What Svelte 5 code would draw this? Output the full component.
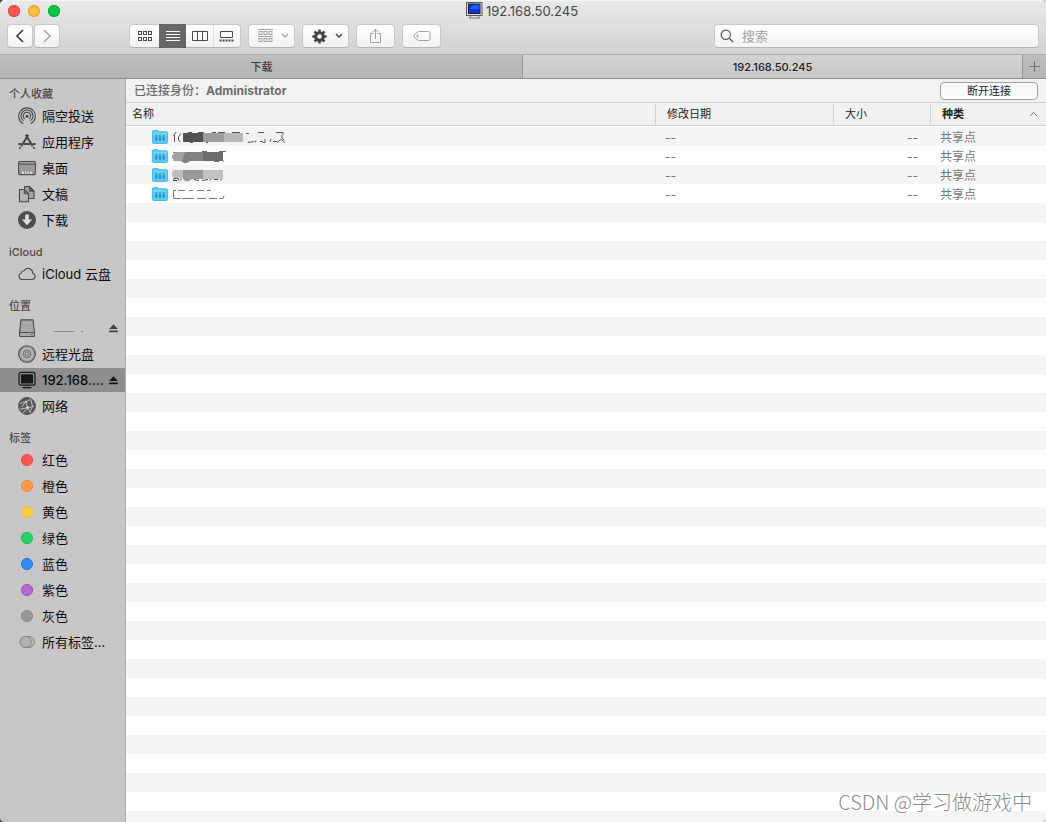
<script>
  const favorites = [
    ['airdrop', '隔空投送'],
    ['apps', '应用程序'],
    ['desktop', '桌面'],
    ['docs', '文稿'],
    ['down', '下载'],
  ];
  const tags = [
    ['红色', '#fc5753', '#e9463f'],
    ['橙色', '#fd9a44', '#ea8434'],
    ['黄色', '#fdca45', '#ecb93c'],
    ['绿色', '#25d366', '#14b850'],
    ['蓝色', '#2e8af7', '#1b74e0'],
    ['紫色', '#b568d2', '#9a50ba'],
    ['灰色', '#999798', '#848283'],
  ];
  const sections = [
    { title: '个人收藏', items: favorites.map(([icon, label]) => ({ icon, label })) },
    { title: 'iCloud', items: [{ icon: 'cloud', label: 'iCloud 云盘' }] },
    {
      title: '位置',
      items: [
        { icon: 'drive', label: '', eject: true },
        { icon: 'disc', label: '远程光盘' },
        { icon: 'screen', label: '192.168....', eject: true, selected: true },
        { icon: 'globe', label: '网络' },
      ],
    },
    {
      title: '标签',
      items: [
        ...tags.map(([label, fill, stroke]) => ({ icon: 'tag', label, fill, stroke })),
        { icon: 'all', label: '所有标签...' },
      ],
    },
  ];
  const rows = [0, 1, 2, 3];
</script>

{#snippet sideIcon(item)}
  <svg class="icon" width="18" height="18" viewBox="0 0 18 18" fill="none" stroke="#4b494a" aria-hidden="true">
    {#if item.icon === 'airdrop'}
      <path d="M5.2 16.6a8.3 8.3 0 1 1 7.6 0M5.6 13.9a6 6 0 1 1 6.8 0M6.8 11.9a3.7 3.7 0 1 1 4.4 0" stroke-width="1.1" />
      <circle cx="9" cy="9.2" r="1.5" fill="#4b494a" stroke="none" />
    {:else if item.icon === 'apps'}
      <path d="M7.8 1.8l6.8 11.400M10.200 1.800L3.400 13.200" stroke-width="2.1" />
      <path d="M.3 11h3.200M6 11h6M14.500 11h3.200" stroke-width="1.8" />
      <path d="M2.600 13.800l-1.200 2.200M15.400 13.800l1.200 2.200" stroke-width="1.5" />
    {:else if item.icon === 'desktop'}
      <rect x=".6" y="2.6" width="16.8" height="13" rx="1" fill="#9b999a" stroke-width="1.1" />
      <path d="M1.200 3.900h15.600" stroke="#bbb9ba" stroke-width="1" />
      <path d="M1 5h16" stroke-width="1" />
      <path d="M4 12.800h10v2.200H4z" fill="#deddde" stroke="none" />
      <path d="M6.500 12.500v3M9 12.500v3M11.500 12.500v3" stroke="#8b898a" />
    {:else if item.icon === 'docs'}
      <path d="M6.500 1.600h5.200l4.300 4.300v7.600H6.500z" fill="#a4a2a3" stroke-width="1.1" />
      <path d="M11.400 1.800v4.400h4.400z" fill="#5d5b5c" stroke-width=".8" />
      <path d="M1.500 4.500h5l4 4v8.200h-9z" fill="#b5b3b4" stroke-width="1.1" />
      <path d="M6.200 4.700v4.100h4z" fill="#777576" stroke-width=".8" />
    {:else if item.icon === 'down'}
      <circle cx="9" cy="9" r="9" fill="#4e4c4d" stroke="none" />
      <path d="M7.200 3.600h3.600v4.900h3.400L9 14.200 3.800 8.500h3.400z" fill="#e0dedf" stroke="none" />
    {:else if item.icon === 'cloud'}
      <path d="M4 14.500a3.400 3.400 0 0 1-.7-6.600A2.600 2.600 0 0 1 6 5.800a4.600 4.600 0 0 1 8.600 2.400A3.200 3.200 0 0 1 14 14.500z" stroke-width="1.1" />
    {:else if item.icon === 'drive'}
      <path d="M3 .9h12l1.500 12.300v3.500q0 .8-.8.8H2.300q-.8 0-.8-.8v-3.500z" fill="#a9a7a8" stroke-width="1.1" />
      <path d="M1.500 13.500h15" stroke-width="1" />
      <path d="M13 15.500h1.600" stroke-width="1.2" />
    {:else if item.icon === 'disc'}
      <circle cx="9" cy="9" r="8.3" fill="#a3a1a2" stroke-width="1.1" />
      <circle cx="9" cy="9" r="5.4" stroke="#b9b7b8" stroke-width="1.5" />
      <circle cx="9" cy="9" r="3.8" stroke="#6b696a" stroke-width=".8" />
      <circle cx="9" cy="9" r="1.5" fill="#d0cecf" stroke="#6b696a" stroke-width=".8" />
    {:else if item.icon === 'screen'}
      <rect x="1" y="1.4" width="16" height="12.8" rx="2" stroke="#181718" stroke-width="1.2" />
      <rect x="2.9" y="3.2" width="12.2" height="9.2" rx=".6" fill="#181718" stroke="none" />
      <path d="M6.500 14.500h5M4.500 16.600h9" stroke="#181718" stroke-width="1.2" />
    {:else if item.icon === 'globe'}
      <circle cx="9" cy="9" r="8.4" fill="#5c5a5b" stroke-width="1" />
      <path d="M2 6.500l6-1.800 5-2.500M8 4.700l1.600 6.100L5 16M9.600 10.800l6.500-1.600M9.600 10.800l3 5M2.200 12l7.400-1.200M8 4.700L3.500 10M13 3l1.500 6.500L12 15" stroke="#c6c4c5" stroke-width=".9" />
      <circle cx="9.5" cy="10.6" r="1.3" fill="#dddbdc" stroke="none" />
      <circle cx="8" cy="4.8" r="1" fill="#dddbdc" stroke="none" />
    {:else if item.icon === 'tag'}
      <circle cx="9" cy="9" r="5.6" fill={item.fill} stroke={item.stroke} stroke-width=".9" />
    {:else}
      <circle cx="10.8" cy="9" r="5.6" fill="#b9b7b8" stroke="#858384" />
      <circle cx="7.6" cy="9" r="5.6" fill="#b3b1b2" stroke="#858384" />
    {/if}
  </svg>
{/snippet}

{#snippet redacted(i)}
  <svg class="redacted" width="116" height="18" viewBox="0 0 116 18" aria-hidden="true">
    {#if i === 0}
      <path d="M4 4L1.500 7.500M2.500 7v7M9 5.500L6.500 9v3l2 2M16 4.500h4M26 4.500h6M40 4.500h4M46 4.500h7M60 4.500h8M86 4.500h6" fill="none" stroke="#444" stroke-width=".9" />
      <rect x="11" y="5" width="20" height="9" fill="#525252" />
      <rect x="31" y="5" width="21" height="9" fill="#9d9d9d" />
      <rect x="52" y="5" width="19" height="9" fill="#b9b9b9" />
      <rect x="71" y="5" width="37" height="8" fill="#f0f0f0" />
      <path d="M18 14.500h3M34 14.500h2M77 13.500l-1 1 6-1M74 5.500h3M84 12.500l-1 2M88 13.500h3M93 11v3.500h-2M99 11l-1 3M104 4.500h7v2l-1 1v3l2 1M101 13.500h4M105 14.500l4-3 4 3" fill="none" stroke="#444" stroke-width=".9" />
    {:else if i === 1}
      <path d="M1 5l3 1-2 8M47 4.500h7M42 14.500h5M30 4.500h5M50 13l2 1.500" fill="none" stroke="#444" stroke-width=".8" />
      <path d="M4 5h12v9l-3 2.500L8 14H3L0 11V8z" fill="#a2a2a2" />
      <path d="M13 5h18v9H18q-4 4-8 0z" fill="#828282" />
      <rect x="31" y="5" width="20" height="9" fill="#6c6c6c" />
    {:else if i === 2}
      <path d="M1 13l5-1 1 2.500M1 14.500h4M9 12.500v2M22 13.500l5 1M30 14.500l6-1M40 12l-2 2.500M42 13.500h4M49 13v1.500" fill="none" stroke="#444" />
      <rect x="0" y="4" width="13" height="8" rx="3" fill="#bdbdbd" />
      <path d="M11 4h20v9H20q-5 5-9 0z" fill="#999" />
      <rect x="31" y="4" width="20" height="9" fill="#c2c2c2" />
    {:else}
      <path d="M4 5.500H1.500v8h7M6 5.500h7M17 5.500h4M25 5.500h7M35 5.500h4M10 13.500h12M25 13.500h9M37 13.500h8M47 13.500h4l1-3" fill="none" stroke="#555" stroke-width=".8" />
    {/if}
  </svg>
{/snippet}

<div class="window">
  <header class="chrome">
    <div class="titlebar">
      <div class="lights">
        <button class="light red" aria-label="关闭"></button>
        <button class="light amber" aria-label="最小化"></button>
        <button class="light green" aria-label="缩放"></button>
      </div>
      <h1>
        <svg width="17" height="17" viewBox="0 0 17 17" aria-hidden="true">
          <rect x=".5" y=".5" width="15.5" height="13" fill="#e2dfc4" stroke="#5a5a52" />
          <rect x="2.5" y="2" width="11.5" height="9.5" fill="#0d38d6" stroke="#14205e" />
          <path d="M3 7l5-4h5.500v4z" fill="#356bf0" opacity=".7" />
          <path d="M5 14l-2 2h11l-2-2" fill="none" stroke="#777768" />
        </svg>
        <span>192.168.50.245</span>
      </h1>
      <div></div>
    </div>
    <div class="toolbar">
      <div class="nav">
        <button class="tool" aria-label="后退"><svg width="10" height="14" viewBox="0 0 10 14"><path d="M8 1L2 7l6 6" fill="none" stroke="#3c3c3c" stroke-width="1.7" /></svg></button>
        <button class="tool" aria-label="前进"><svg width="10" height="14" viewBox="0 0 10 14"><path d="M2 1l6 6-6 6" fill="none" stroke="#a6a6a6" stroke-width="1.5" /></svg></button>
      </div>
      <div class="views">
        <button aria-label="图标显示">
          <svg width="16" height="12" viewBox="0 0 16 12" fill="none" stroke="#4a4a4a">
            {#each [1, 6, 11] as x}
              <rect x={x + 0.5} y="1.5" width="3" height="3" />
              <rect x={x + 0.5} y="7.5" width="3" height="3" />
            {/each}
          </svg>
        </button>
        <button class="on" aria-label="列表显示"><svg width="16" height="12" viewBox="0 0 16 12"><path d="M1 1.500h14M1 4.500h14M1 7.500h14M1 10.500h14" stroke="#fff" /></svg></button>
        <button aria-label="分栏显示"><svg width="16" height="12" viewBox="0 0 16 12"><path d="M.5 1.500h15v9H.5zM5.500 1.500v9M10.500 1.500v9" fill="none" stroke="#4a4a4a" /></svg></button>
        <button aria-label="画廊显示"><svg width="16" height="12" viewBox="0 0 16 12"><path d="M1.500 1.500h12v6h-12z" fill="none" stroke="#4a4a4a" /><path d="M.5 10.500h14" stroke="#4a4a4a" stroke-width="2" stroke-dasharray="2 1" /></svg></button>
      </div>
      <button class="tool menu" aria-label="分组">
        <svg width="15" height="15" viewBox="0 0 15 15" fill="none" stroke="#a3a3a3">
          <path d="M0 .5h15M0 7.500h15" />
          {#each [0, 5, 10] as x}
            <rect x={x + 1} y="2.5" width="3" height="3" />
            <rect x={x + 1} y="9.5" width="3" height="3" />
          {/each}
        </svg>
        <svg width="8" height="6" viewBox="0 0 8 6"><path d="M1 1l3 3 3-3" fill="none" stroke="#a3a3a3" stroke-width="1.3" /></svg>
      </button>
      <button class="tool menu" aria-label="操作">
        <svg width="15" height="15" viewBox="0 0 15 15" fill="none" stroke="#454545">
          <circle cx="7.5" cy="7.5" r="3.8" stroke-width="3" />
          <path d="M7.500.4v3M7.500 11.600v3M.4 7.500h3M11.600 7.500h3M2.500 2.500l2 2M10.500 10.500l2 2M2.500 12.500l2-2M10.500 4.500l2-2" stroke-width="2.5" />
        </svg>
        <svg width="8" height="6" viewBox="0 0 8 6"><path d="M1 1l3 3 3-3" fill="none" stroke="#454545" stroke-width="1.5" /></svg>
      </button>
      <button class="tool wide" aria-label="共享"><svg width="13" height="17" viewBox="0 0 13 17"><path d="M4.500 5.500h-3v9h10v-9h-3M6.500 11V1.500M3.500 4.200l3-3 3 3" fill="none" stroke="#a0a0a0" /></svg></button>
      <button class="tool wide" aria-label="标记"><svg width="18" height="12" viewBox="0 0 18 12" fill="none" stroke="#a0a0a0"><path d="M5.500 1.500h10q1.500 0 1.500 1.500v6q0 1.500-1.500 1.500h-10L1.600 7.600q-1.200-1.600 0-3.200z" /><circle cx="4.5" cy="6" r=".8" /></svg></button>
      <label class="search">
        <svg width="14" height="14" viewBox="0 0 14 14"><path d="M9.300 9.300L13 13" stroke="#555" stroke-width="1.4" /><circle cx="5.8" cy="5.8" r="4.6" fill="none" stroke="#555" stroke-width="1.2" /></svg>
        <input type="search" placeholder="搜索" aria-label="搜索" />
      </label>
    </div>
  </header>

  <nav class="tabs">
    <button>下载</button>
    <button class="current">192.168.50.245</button>
    <button class="add" aria-label="新建标签页"><svg width="11" height="11" viewBox="0 0 11 11"><path d="M0 5.500h11M5.500 0v11" stroke="#757575" /></svg></button>
  </nav>

  <div class="body">
    <aside>
      {#each sections as section}
        <h2>{section.title}</h2>
        <ul>
          {#each section.items as item}
            <li class:selected={item.selected}>
              <a href="#top">
                {@render sideIcon(item)}
                {#if item.label}
                  <span class="label">{item.label}</span>
                {:else}
                  <svg width="50" height="8" viewBox="0 0 50 8" aria-hidden="true"><path d="M12 7.500h20M39 7.500h2" stroke="#777" stroke-width=".8" /></svg>
                {/if}
              </a>
              {#if item.eject}
                <button class="eject" aria-label="推出"><svg width="9" height="9" viewBox="0 0 9 9"><path d="M4.500.3L8.800 5H.2zM.2 6.500h8.600v1.800H.2z" /></svg></button>
              {/if}
            </li>
          {/each}
        </ul>
      {/each}
    </aside>

    <main>
      <div class="status">
        <span>已连接身份：<b>Administrator</b></span>
        <button>断开连接</button>
      </div>
      <div class="list">
        <table>
          <colgroup><col /><col class="date" /><col class="size" /><col class="kind" /></colgroup>
          <thead>
            <tr>
              <th>名称</th>
              <th>修改日期</th>
              <th>大小</th>
              <th class="sorted"><div>种类<svg width="9" height="6" viewBox="0 0 9 6"><path d="M1 5l3.500-3.500L8 5" fill="none" stroke="#777" /></svg></div></th>
            </tr>
          </thead>
          <tbody>
            {#each rows as i}
              <tr>
                <td>
                  <div class="name">
                    <svg width="16" height="14" viewBox="0 0 16 14" aria-hidden="true">
                      <path d="M.5 2q0-1.500 1-1.500h4q1 0 1.300 1.300h7.700q1 0 1 1V12q0 1.500-1 1.500h-13q-1 0-1-1.500z" fill="#5cccf8" stroke="#4bb9ea" />
                      <path d="M1 3.800h14" stroke="#8fdcfa" stroke-width=".8" />
                      <g fill="#2490c6">
                        <circle cx="4.3" cy="5.9" r=".9" /><circle cx="8" cy="5.9" r=".9" /><circle cx="11.7" cy="5.9" r=".9" />
                        <path d="M3.100 7.200h2.400v1.800l-.6 2.300H3.700L3.100 9zM6.800 7.200h2.400v1.800l-.6 2.300H7.400L6.800 9zM10.500 7.200h2.400v1.800l-.6 2.300h-1.200l-.6-2.300z" />
                      </g>
                    </svg>
                    {@render redacted(i)}
                  </div>
                </td>
                <td>--</td>
                <td class="num">--</td>
                <td>共享点</td>
              </tr>
            {/each}
          </tbody>
        </table>
        <div class="stripes"></div>
      </div>
      <p class="watermark">CSDN @学习做游戏中</p>
    </main>
  </div>
</div>

<style>
  :global(body) {
    margin: 0;
    background: linear-gradient(90deg, #4a4442, #c8c8c8);
  }
  .window {
    min-height: 100vh;
    display: flex;
    flex-direction: column;
    border-radius: 5px;
    overflow: hidden;
    background: #fff;
    color: #222;
    font: 12px/16px Inter, "Noto Sans CJK SC", sans-serif;
  }
  button {
    font: inherit;
    color: inherit;
    padding: 0;
    border: 0;
    background: none;
  }
  svg {
    display: block;
    flex: none;
  }
  .chrome {
    background: linear-gradient(#e9e9e9, #d2d2d2);
    border-top: 1px solid #f4f4f4;
    border-bottom: 1px solid #ababab;
    padding-bottom: 6px;
  }
  .titlebar {
    display: grid;
    grid-template-columns: 1fr auto 1fr;
    align-items: center;
    height: 23px;
    padding: 0 10px 0 8px;
  }
  .lights {
    display: flex;
    gap: 8px;
    padding-bottom: 3px;
  }
  .light {
    width: 12px;
    height: 12px;
    border-radius: 50%;
  }
  .red { background: #fc5753; box-shadow: inset 0 0 0 1px #df4744; }
  .amber { background: #fdbc40; box-shadow: inset 0 0 0 1px #de9f34; }
  .green { background: #06c749; box-shadow: inset 0 0 0 1px #05a93c; }
  h1 {
    display: flex;
    align-items: center;
    gap: 3px;
    margin: 0;
    padding-bottom: 4px;
    font-size: 13px;
    font-weight: 400;
    color: #454545;
  }
  .toolbar {
    display: flex;
    gap: 7px;
    padding: 0 7px;
    height: 24px;
  }
  .nav {
    display: flex;
    gap: 1px;
    margin-right: 62px;
  }
  .tool, .views, .search {
    box-sizing: border-box;
    height: 24px;
    border: 1px solid #c9c9c9;
    border-bottom-color: #b4b4b4;
    border-radius: 4px;
    background: linear-gradient(#fff, #f3f3f3);
  }
  .tool {
    display: flex;
    align-items: center;
    justify-content: center;
    width: 26px;
  }
  .tool.menu {
    width: 47px;
    justify-content: space-between;
    padding: 0 5px 0 9px;
  }
  .tool.wide { width: 39px; }
  .views {
    display: flex;
    width: 112px;
  }
  .views button {
    flex: 0 0 27px;
    display: grid;
    place-items: center;
  }
  .views button:first-child { flex: 1; }
  .views button:last-child {
    box-sizing: border-box;
    border-left: 1px solid #ddd;
  }
  .views .on {
    background: #666;
    margin: -1px 0;
  }
  .search {
    flex: 0 1 325px;
    display: flex;
    align-items: center;
    gap: 8px;
    min-width: 0;
    margin-left: auto;
    padding: 0 5px;
  }
  .search input {
    flex: 1;
    min-width: 0;
    padding: 0;
    border: 0;
    outline: 0;
    background: none;
    font: 13px/20px Inter, "Noto Sans CJK SC", sans-serif;
  }
  .search input::placeholder { color: #a2a2a2; }
  .tabs {
    display: grid;
    grid-template-columns: 50% 1fr 23px;
    height: 23px;
    border-bottom: 1px solid #8f8f8f;
    background: linear-gradient(#bebebe, #b5b5b5);
    font-size: 11px;
    font-weight: 500;
    color: #404040;
  }
  .tabs button {
    display: grid;
    place-items: center;
  }
  .tabs .current {
    margin-left: -1px;
    border: solid #979797;
    border-width: 0 1px;
    background: linear-gradient(#d3d3d3, #c9c9c9);
    color: #222;
  }
  .body {
    flex: 1;
    display: flex;
  }
  aside {
    flex: none;
    width: 125px;
    border-right: 1px solid #adabac;
    background: #c8c6c7;
  }
  h2 {
    margin: 0;
    padding: 10px 9px 0;
    font-size: 11px;
    line-height: 18px;
    font-weight: 500;
    color: #4c4a4b;
  }
  h2:first-child { padding-top: 6px; }
  ul {
    display: grid;
    gap: 2px;
    list-style: none;
    margin: 0;
    padding: 1px 0;
  }
  li {
    display: flex;
    align-items: center;
    height: 24px;
    padding: 0 6px 0 18px;
  }
  li.selected { background: #8f8d8e; }
  li a {
    flex: 1;
    display: flex;
    align-items: center;
    gap: 6px;
    min-width: 0;
    color: #0c0c0c;
    text-decoration: none;
    font-size: 13px;
    line-height: 20px;
  }
  .label { white-space: nowrap; }
  .selected .label { font-weight: 500; }
  .eject {
    padding: 1px;
    fill: #434142;
  }
  .selected .eject { fill: #151515; }
  main {
    position: relative;
    flex: 1;
    min-width: 0;
    display: flex;
    flex-direction: column;
  }
  .status {
    display: flex;
    align-items: center;
    justify-content: space-between;
    height: 23px;
    padding: 0 8px;
    border-bottom: 1px solid #d0d0d0;
    background: #f2f2f2;
    color: #6c6c6c;
    font-weight: 500;
  }
  .status b { font-weight: 700; }
  .status button {
    width: 98px;
    height: 18px;
    border: 1px solid #a0a0a0;
    border-radius: 4px;
    background: #fafafa;
    color: #222;
    font-size: 11px;
    font-weight: 400;
    line-height: 16px;
  }
  .list {
    flex: 1;
    display: flex;
    flex-direction: column;
  }
  table {
    width: 100%;
    table-layout: fixed;
    border-collapse: separate;
    border-spacing: 0;
  }
  .date { width: 178px; }
  .size { width: 97px; }
  .kind { width: 116px; }
  th {
    height: 22px;
    padding: 0 6px;
    border-bottom: 1px solid #cdcdcd;
    background: linear-gradient(#d2d2d2, #d2d2d2) left center / 1px 20px no-repeat #f1f1f1;
    font-size: 11px;
    font-weight: 400;
    text-align: left;
  }
  th:first-child { background: #f1f1f1; }
  th:not(:first-child) { padding-left: 12px; }
  th.sorted {
    padding-right: 8px;
    font-weight: 600;
  }
  th div {
    display: flex;
    align-items: center;
    justify-content: space-between;
  }
  td {
    height: 17px;
    padding: 2px 12px 0 10px;
    color: #757575;
    line-height: 17px;
  }
  td:first-child {
    height: 19px;
    padding: 0 26px;
  }
  thead::after {
    content: "";
    display: block;
    height: 1px;
  }
  tbody tr:nth-child(odd) { background: #f5f5f5; }
  .num { text-align: right; }
  .name {
    display: flex;
    align-items: center;
    gap: 4px;
  }
  .stripes {
    flex: 1;
    background: repeating-linear-gradient(#f5f5f5 0 19px, #fff 19px 38px);
  }
  .watermark {
    position: absolute;
    right: 14px;
    bottom: 7px;
    margin: 0;
    color: #8c8c8c;
    font: 300 20px/26px "Noto Sans CJK SC", sans-serif;
    text-shadow: 1px 1px 0 #fff;
  }
</style>
